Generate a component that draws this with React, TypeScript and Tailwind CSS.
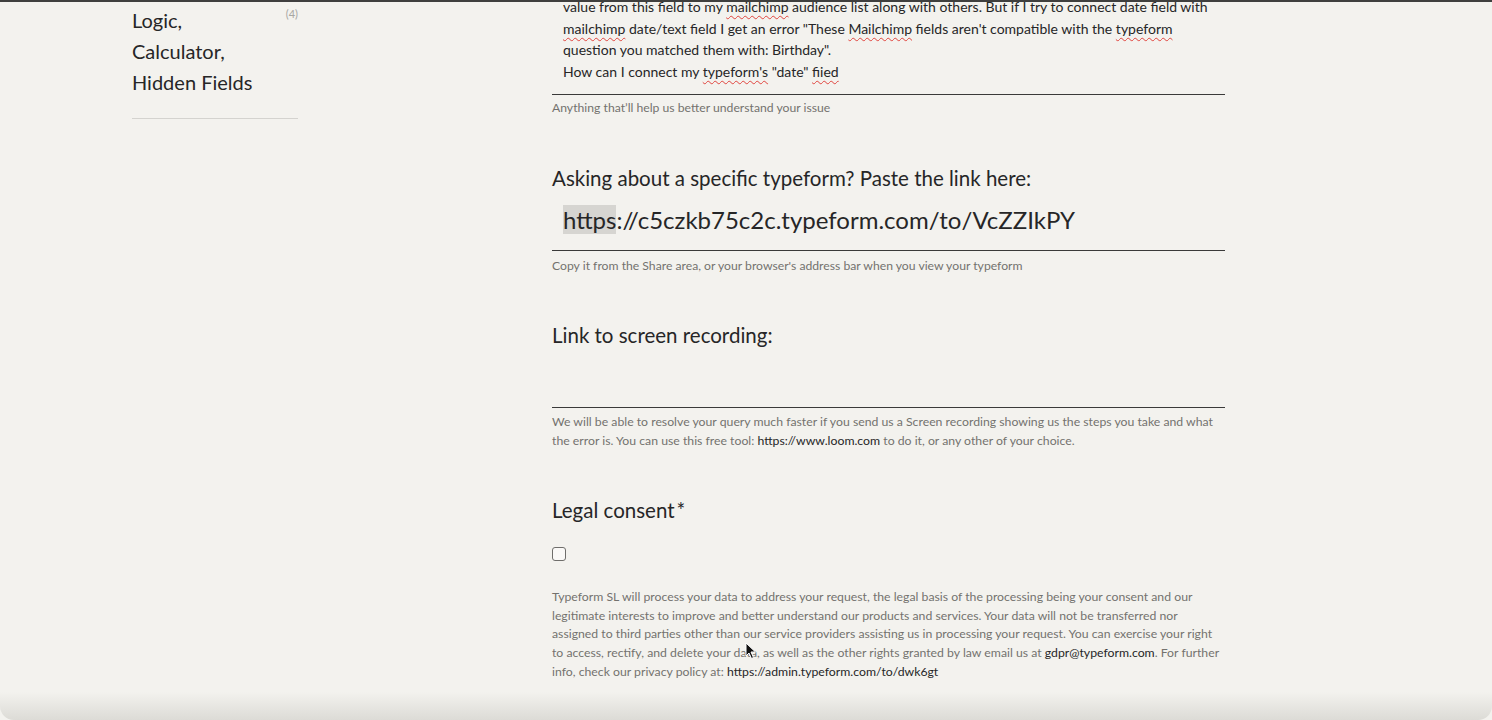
import React from "react";

const font = { fontFamily: "Lato, 'Noto Sans', sans-serif" };

function Squiggle({ children }: { children: React.ReactNode }) {
  return (
    <span className="underline decoration-wavy decoration-[#e0443e] decoration-1 underline-offset-[3px]">
      {children}
    </span>
  );
}

export default function App() {
  return (
    <div
      className="relative w-[1492px] h-[720px] overflow-hidden bg-[#f3f2ee] text-[#262627] border-t-2 border-[#3f3f3e]"
      style={font}
    >
      <div className="flex">
        {/* Sidebar */}
        <aside className="w-[166px] ml-[132px] shrink-0">
          <div className="relative pt-[3px] pb-[20px] border-b border-[#d4d3cf]">
            <div className="text-[20px] leading-[31px]">
              <div>Logic,</div>
              <div>Calculator,</div>
              <div>Hidden Fields</div>
            </div>
            <span className="absolute right-0 top-[4px] text-[11px] text-[#a8a7a3]">(4)</span>
          </div>
        </aside>

        {/* Main */}
        <main className="ml-[254px] w-[673px] shrink-0">
          {/* Textarea */}
          <div className="-mt-[6px]">
            <div className="px-[11px] pb-[11px] text-[14px] leading-[21.7px] whitespace-nowrap">
              <div>
                value from this field to my <Squiggle>mailchimp</Squiggle> audience list along with others. But if I try to connect date field with
              </div>
              <div>
                <Squiggle>mailchimp</Squiggle> date/text field I get an error "These <Squiggle>Mailchimp</Squiggle> fields aren't compatible with the <Squiggle>typeform</Squiggle>
              </div>
              <div>question you matched them with: Birthday".</div>
              <div>
                How can I connect my <Squiggle>typeform's</Squiggle> "date" <Squiggle>fiied</Squiggle>
              </div>
            </div>
            <div className="h-px bg-[#3a3a39]" />
            <p className="mt-[5px] text-[12.2px] leading-[16px] text-[#73726e]">
              Anything that’ll help us better understand your issue
            </p>
          </div>

          {/* Typeform link */}
          <div className="mt-[49px]">
            <h2 className="text-[20.5px] leading-[26px]">Asking about a specific typeform? Paste the link here:</h2>
            <div className="mt-[14px] px-[11px] pb-[15px] text-[24px] leading-[30px] whitespace-nowrap">
              <span className="bg-[#d6d5d1]">https</span>://c5czkb75c2c.typeform.com/to/VcZZIkPY
            </div>
            <div className="h-px bg-[#3a3a39]" />
            <p className="mt-[7px] text-[12.2px] leading-[16px] text-[#73726e]">
              Copy it from the Share area, or your browser's address bar when you view your typeform
            </p>
          </div>

          {/* Screen recording */}
          <div className="mt-[48px]">
            <h2 className="text-[20.5px] leading-[26px]">Link to screen recording:</h2>
            <div className="h-[59px]" />
            <div className="h-px bg-[#3a3a39]" />
            <p className="mt-[4px] text-[12.25px] leading-[19px] text-[#73726e]">
              We will be able to resolve your query much faster if you send us a Screen recording showing us the steps you take and what the error is. You can use this free tool:{" "}
              <span className="text-[#262627]">https://www.loom.com</span> to do it, or any other of your choice.
            </p>
          </div>

          {/* Legal consent */}
          <div className="mt-[47px]">
            <h2 className="text-[20.5px] leading-[26px]">
              Legal consent<span className="ml-[2px]">*</span>
            </h2>
            <div className="mt-[24px] w-[14px] h-[14px] rounded-[3px] border border-[#6f6e6b] bg-[#faf9f7]" />
            <p className="mt-[27px] text-[12.25px] leading-[18.7px] text-[#73726e]">
              Typeform SL will process your data to address your request, the legal basis of the processing being your consent and our legitimate interests to improve and better understand our products and services. Your data will not be transferred nor assigned to third parties other than our service providers assisting us in processing your request. You can exercise your right to access, rectify, and delete your data, as well as the other rights granted by law email us at{" "}
              <span className="text-[#262627]">gdpr@typeform.com</span>. For further info, check our privacy policy at:{" "}
              <span className="text-[#262627]">https://admin.typeform.com/to/dwk6gt</span>
            </p>
          </div>
        </main>
      </div>

      {/* Cursor */}
      <svg className="absolute left-[745px] top-[640px]" width="12" height="18" viewBox="0 0 12 18">
        <path d="M1 1 L1 14 L4 11 L6.5 16.5 L8.5 15.5 L6 10 L10.5 10 Z" fill="#111" stroke="#fff" strokeWidth="1" />
      </svg>

      {/* Bottom shadow */}
      <div className="absolute left-0 right-0 bottom-0 h-[28px] rounded-b-[14px] bg-gradient-to-b from-transparent to-[#dcdbd6] pointer-events-none" />
    </div>
  );
}
